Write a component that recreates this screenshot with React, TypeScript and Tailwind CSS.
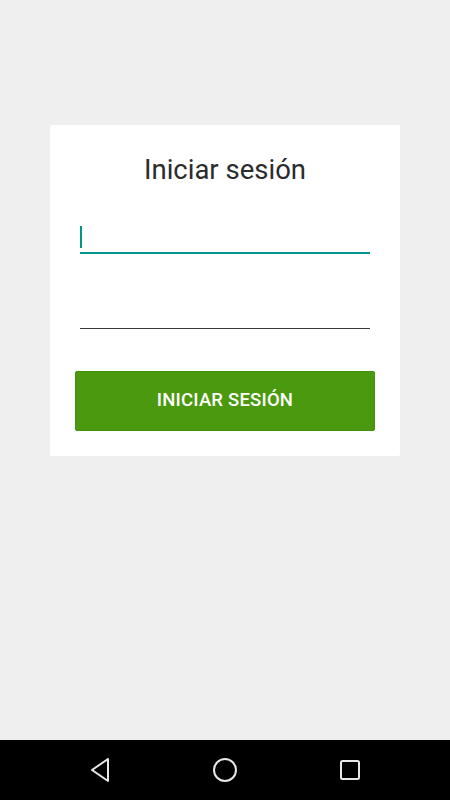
export default function App() {
  return (
    <div className="flex h-[800px] w-[450px] flex-col bg-[#efefef] font-['Roboto',sans-serif]">
      <main className="flex-1 px-[50px] pt-[125px]">
        <div className="rounded-[2px] bg-white px-[30px] pb-[25px] pt-[29px]">
          <h1 className="text-center text-[27.5px] leading-[32px] text-[#2b2b2b]">
            Iniciar sesión
          </h1>

          <div className="mt-[26px] flex h-[42px] items-end border-b-2 border-[#009688] pb-[4px]">
            <div className="h-[22px] w-[2px] bg-[#009688]" />
          </div>

          <div className="mt-[33px] h-[42px] border-b border-[#3a3a3a]" />

          <button className="-mx-[5px] mt-[42px] flex h-[60px] w-[calc(100%+10px)] items-center justify-center rounded-[2px] border border-[#3f8f0b] bg-[#4a990e] text-[18.5px] font-medium tracking-[0.2px] text-white">
            INICIAR SESIÓN
          </button>
        </div>
      </main>

      <nav className="flex h-[60px] items-center justify-center bg-black">
        <div className="flex w-[125px] justify-center">
          <svg width="24" height="26" viewBox="0 0 24 26" fill="none">
            <path
              d="M20 2 L4 13 L20 24 Z"
              stroke="#e8e8e8"
              strokeWidth="2"
              strokeLinejoin="round"
            />
          </svg>
        </div>
        <div className="flex w-[125px] justify-center">
          <svg width="26" height="26" viewBox="0 0 26 26" fill="none">
            <circle cx="13" cy="13" r="11" stroke="#e8e8e8" strokeWidth="2" />
          </svg>
        </div>
        <div className="flex w-[125px] justify-center">
          <svg width="24" height="24" viewBox="0 0 24 24" fill="none">
            <rect
              x="3"
              y="3"
              width="18"
              height="18"
              rx="1.5"
              stroke="#e8e8e8"
              strokeWidth="2"
            />
          </svg>
        </div>
      </nav>
    </div>
  )
}
